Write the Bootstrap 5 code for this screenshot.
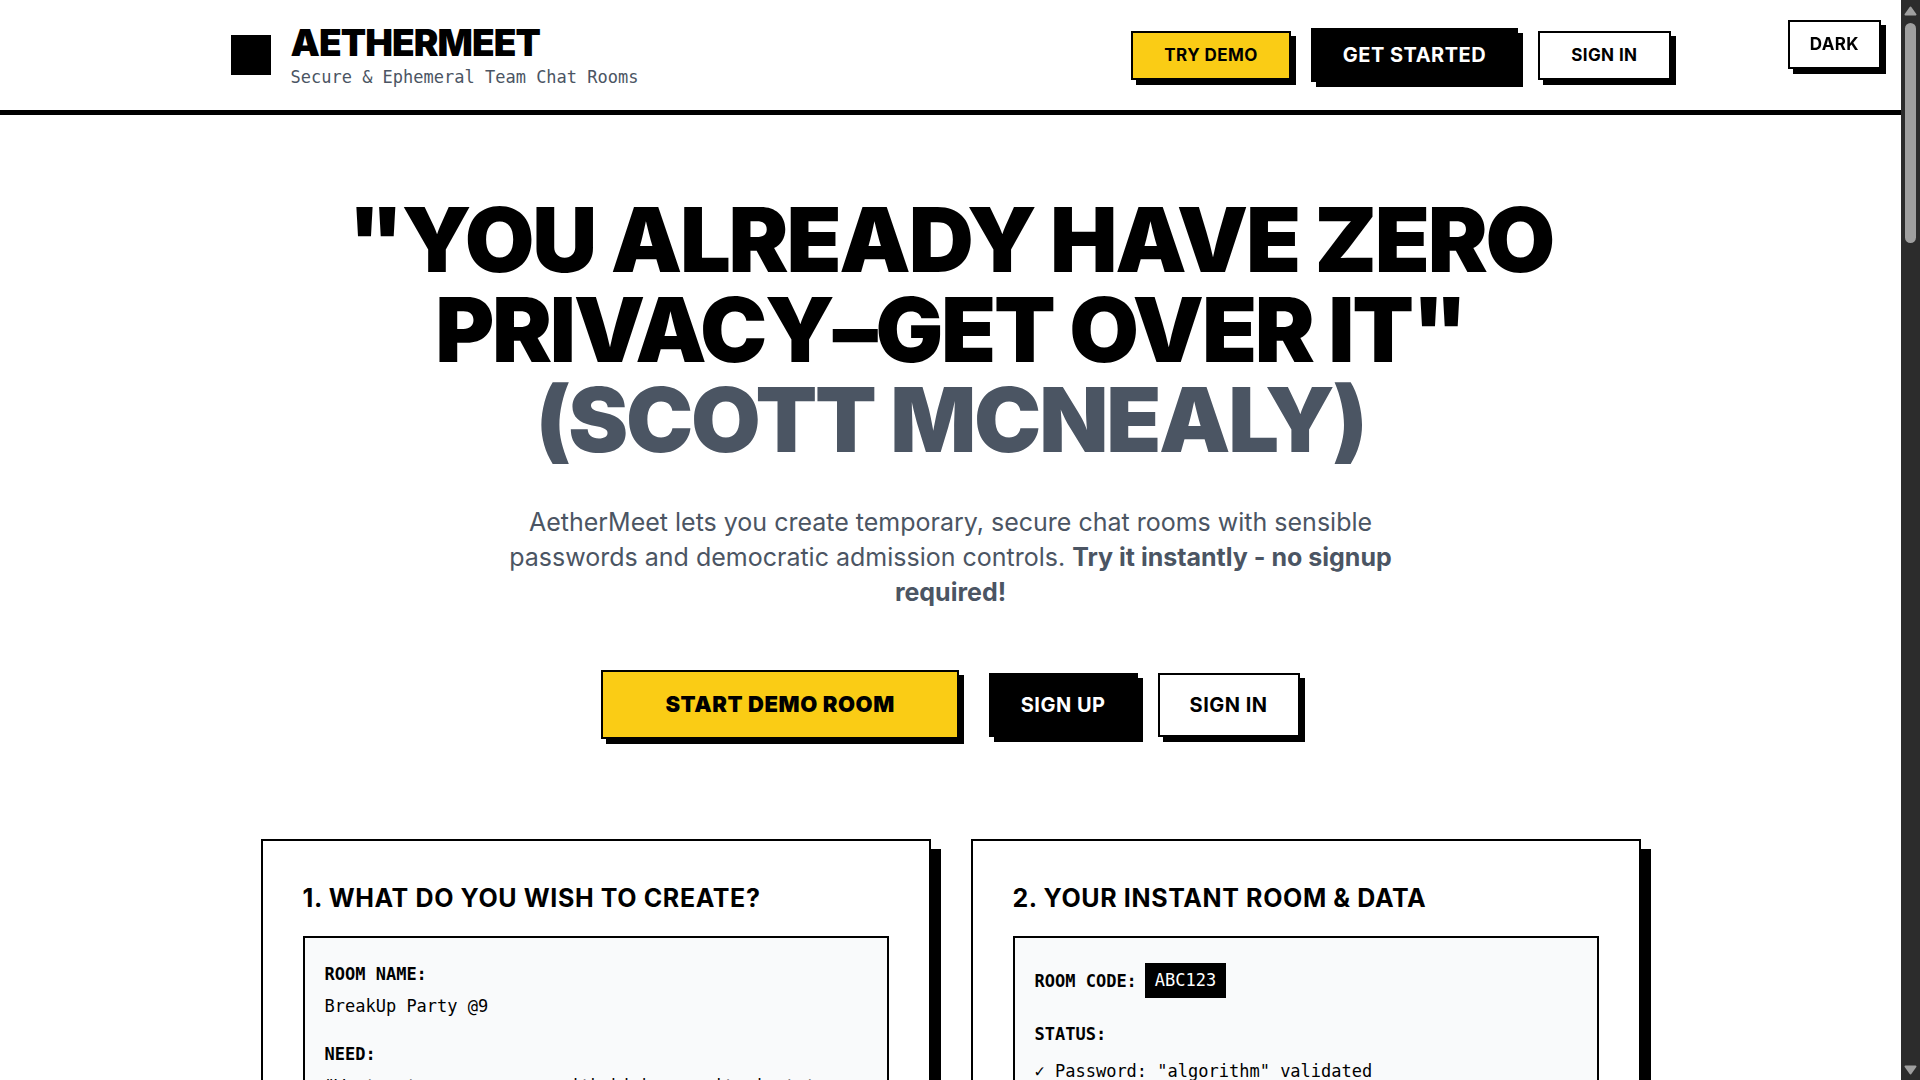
<!DOCTYPE html>
<html lang="en">
<head>
<meta charset="utf-8">
<meta name="viewport" content="width=device-width, initial-scale=1">
<title>AetherMeet</title>
<link href="https://cdn.jsdelivr.net/npm/bootstrap@5.3.0/dist/css/bootstrap.min.css" rel="stylesheet">
<style>
  :root { --ink: #000; --muted: #4b5563; --accent: #facc15; --bar: 19px; }
  body { font-family: Inter, "Liberation Sans", sans-serif; color: var(--ink); background: #fff; height: 100vh; overflow: hidden; padding-right: var(--bar); }
  .mono { font-family: "DejaVu Sans Mono", "Liberation Mono", monospace; }
  .wrap { max-width: 1440px; margin: 0 auto; }
  .tight { letter-spacing: -0.025em; }
  .site-header { border-bottom: 5px solid var(--ink); padding: 20px 0; }
  .brand-gap { gap: 20px; }
  .logo { width: 40px; height: 40px; background: var(--ink); }
  .brand-name { font-size: 37px; line-height: 45px; font-weight: 900; }
  .tagline { font-size: 17px; line-height: 25px; color: var(--muted); }
  .btn-block { --bs-btn-border-radius: 0; --bs-btn-border-width: 2px; --bs-btn-border-color: #000; --bs-btn-color: #000; --bs-btn-bg: #fff;
    --bs-btn-hover-bg: #000; --bs-btn-hover-color: #fff; --bs-btn-hover-border-color: #000;
    --bs-btn-font-size: 17px; --bs-btn-line-height: 25px; --bs-btn-font-weight: 700; --bs-btn-padding-x: 31px; --bs-btn-padding-y: 10px;
    box-shadow: 5px 5px 0 var(--ink); white-space: nowrap; letter-spacing: 0.025em; }
  .btn-accent { --bs-btn-bg: var(--accent); }
  .btn-ink { --bs-btn-bg: #000; --bs-btn-color: #fff; }
  .btn-mid { --bs-btn-font-size: 20px; --bs-btn-line-height: 30px; --bs-btn-padding-x: 30px; }
  .btn-tall { --bs-btn-font-size: 20px; --bs-btn-line-height: 30px; --bs-btn-padding-x: 30px; --bs-btn-padding-y: 15px; }
  .btn-hero { --bs-btn-font-size: 22px; --bs-btn-line-height: 35px; --bs-btn-padding-y: 15px; --bs-btn-padding-x: 62px; --bs-btn-font-weight: 900; margin-right: 10px; }
  .theme-toggle { position: fixed; top: 20px; right: calc(var(--bar) + 20px); --bs-btn-padding-x: 20px; }
  .hero { padding: 80px 30px 100px; }
  .hero h1 { font-size: 90px; line-height: 90px; font-weight: 900; margin-bottom: 40px; }
  .muted { color: var(--muted); }
  .pitch { font-size: 25px; line-height: 35px; color: var(--muted); max-width: 900px; margin: 0 auto 60px; }
  .panels { gap: 40px; padding: 0 30px; }
  .panel { flex: 1 1 0; border: 2px solid var(--ink); box-shadow: 10px 10px 0 var(--ink); padding: 40px; background: #fff; }
  .panel h2 { font-size: 25px; line-height: 35px; font-weight: 700; letter-spacing: 0.025em; margin-bottom: 20px; }
  .sheet { border: 2px solid var(--ink); background: #f9fafb; padding: 20px; font-size: 17px; line-height: 32px; }
  .sheet p { margin-bottom: 16px; }
  .sheet strong { font-weight: 700; }
  .code-row { gap: 8px; padding: 5px 0 4px; }
  .code-chip { background: var(--ink); color: #fff; padding: 5px 10px; line-height: 25px; }
  .status-label { display: block; margin-bottom: 5px; }
  .scroll { position: fixed; top: 0; right: 0; bottom: 0; width: var(--bar); background: #2c2c2c; padding: 6px 0 5px; }
  .scroll-thumb { width: 11px; height: 220px; border-radius: 6px; background: #9f9f9f; margin-top: 7px; }
</style>
</head>
<body>
<header class="site-header">
  <div class="wrap d-flex justify-content-between align-items-center">
    <div class="d-flex align-items-center brand-gap">
      <div class="logo"></div>
      <div>
        <div class="brand-name tight">AETHERMEET</div>
        <div class="tagline mono">Secure &amp; Ephemeral Team Chat Rooms</div>
      </div>
    </div>
    <nav class="d-flex align-items-center brand-gap">
      <a href="#demo" class="btn btn-block btn-accent">TRY DEMO</a>
      <a href="#signup" class="btn btn-block btn-ink btn-mid">GET STARTED</a>
      <a href="#signin" class="btn btn-block">SIGN IN</a>
    </nav>
  </div>
</header>
<button type="button" class="btn btn-block theme-toggle">DARK</button>

<main class="wrap">
  <section class="hero text-center">
    <h1 class="tight">"YOU ALREADY HAVE ZERO<br>PRIVACY–GET OVER IT"<br><span class="muted">(SCOTT MCNEALY)</span></h1>
    <p class="pitch">AetherMeet lets you create temporary, secure chat rooms with sensible passwords and democratic admission controls. <strong>Try it instantly - no signup required!</strong></p>
    <div class="d-flex justify-content-center align-items-center brand-gap">
      <a href="#demo" class="btn btn-block btn-accent btn-hero">START DEMO ROOM</a>
      <a href="#signup" class="btn btn-block btn-ink btn-tall">SIGN UP</a>
      <a href="#signin" class="btn btn-block btn-tall">SIGN IN</a>
    </div>
  </section>
  <section class="panels d-flex">
    <article class="panel">
      <h2>1. WHAT DO YOU WISH TO CREATE?</h2>
      <div class="sheet mono">
        <p><strong>ROOM NAME:</strong><br>BreakUp Party @9</p>
        <p><strong>NEED:</strong><br>"Want a temporary room with high security instat</p>
      </div>
    </article>
    <article class="panel">
      <h2>2. YOUR INSTANT ROOM &amp; DATA</h2>
      <div class="sheet mono">
        <p class="d-flex align-items-center code-row"><strong>ROOM CODE:</strong><span class="code-chip">ABC123</span></p>
        <strong class="status-label">STATUS:</strong>
        <div>✓ Password: "algorithm" validated</div>
      </div>
    </article>
  </section>
</main>

<div class="scroll d-flex flex-column align-items-center" aria-hidden="true">
  <svg width="13" height="10" viewBox="0 0 26 20"><path d="M13 3 L23 17 H3 Z" fill="#9f9f9f" stroke="#9f9f9f" stroke-width="4" stroke-linejoin="round"/></svg>
  <div class="scroll-thumb"></div>
  <svg class="mt-auto" width="13" height="10" viewBox="0 0 26 20"><path d="M13 17 L23 3 H3 Z" fill="#9f9f9f" stroke="#9f9f9f" stroke-width="4" stroke-linejoin="round"/></svg>
</div>
<script src="https://cdn.jsdelivr.net/npm/bootstrap@5.3.0/dist/js/bootstrap.bundle.min.js"></script>
</body>
</html>
